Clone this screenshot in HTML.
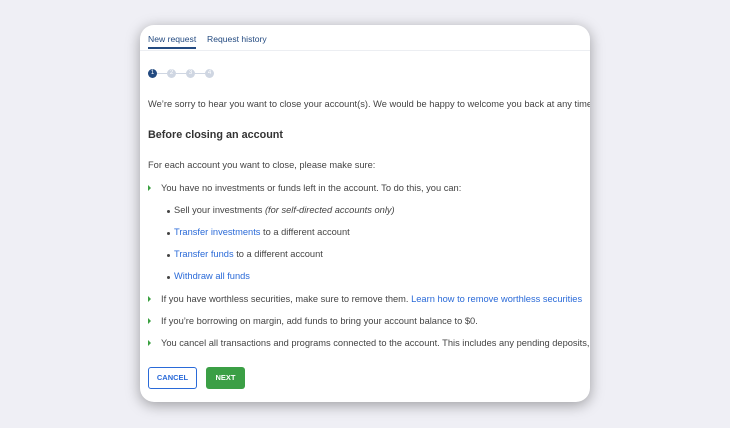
<!DOCTYPE html><html><head><style>
body{margin:0;width:730px;height:428px;background:#efeff5;font-family:"Liberation Sans",sans-serif;position:relative;overflow:hidden}
.card{position:absolute;left:140px;top:25px;width:450px;height:377px;background:#fff;border-radius:14px;box-shadow:0 3px 14px rgba(0,0,0,.35);overflow:hidden}
.t{position:absolute;white-space:nowrap;font-size:9.3px;color:#444}
a{color:#2a6ad8;text-decoration:none}
.tab{position:absolute;top:9px;font-size:8.6px;color:#234a80}
.dot{position:absolute;top:44px;width:9px;height:9px;border-radius:50%;background:#cfd6e2;color:#fff;font-size:6px;text-align:center;line-height:9px}
.ln{position:absolute;top:48px;height:1px;background:#cfd6e2;width:10px}
.arr{position:absolute;width:0;height:0;border-left:3px solid #3aa040;border-top:3px solid transparent;border-bottom:3px solid transparent}
.b{position:absolute;width:3px;height:3px;border-radius:50%;background:#444}
</style></head><body><div class="card">
<div class="tab" style="left:8px">New request</div>
<div style="position:absolute;left:8px;top:22px;width:48px;height:1.5px;background:#234a80"></div>
<div class="tab" style="left:67px">Request history</div>
<div style="position:absolute;left:0;top:25px;width:450px;height:1px;background:#eceef2"></div>
<div class="dot" style="left:8px;background:#234a80">1</div><div class="ln" style="left:17px"></div>
<div class="dot" style="left:27px">2</div><div class="ln" style="left:36px"></div>
<div class="dot" style="left:46px">3</div><div class="ln" style="left:55px"></div>
<div class="dot" style="left:65px">4</div>
<div class="t" style="left:8px;top:74px">We’re sorry to hear you want to close your account(s). We would be happy to welcome you back at any time.</div>
<div class="t" style="left:8px;top:104px;font-weight:bold;font-size:10.8px;color:#333">Before closing an account</div>
<div class="t" style="left:8px;top:135px">For each account you want to close, please make sure:</div>
<div class="arr" style="left:8px;top:160px"></div><div class="t" style="left:21px;top:158px">You have no investments or funds left in the account. To do this, you can:</div>
<div class="b" style="left:27px;top:185px"></div><div class="t" style="left:34px;top:180px">Sell your investments <i>(for self-directed accounts only)</i></div>
<div class="b" style="left:27px;top:207px"></div><div class="t" style="left:34px;top:202px"><a>Transfer investments</a> to a different account</div>
<div class="b" style="left:27px;top:229px"></div><div class="t" style="left:34px;top:224px"><a>Transfer funds</a> to a different account</div>
<div class="b" style="left:27px;top:251px"></div><div class="t" style="left:34px;top:246px"><a>Withdraw all funds</a></div>
<div class="arr" style="left:8px;top:271px"></div><div class="t" style="left:21px;top:269px">If you have worthless securities, make sure to remove them. <a>Learn how to remove worthless securities</a></div>
<div class="arr" style="left:8px;top:293px"></div><div class="t" style="left:21px;top:291px">If you’re borrowing on margin, add funds to bring your account balance to $0.</div>
<div class="arr" style="left:8px;top:315px"></div><div class="t" style="left:21px;top:313px">You cancel all transactions and programs connected to the account. This includes any pending deposits, withdrawals</div>
<div style="position:absolute;left:8px;top:342px;width:47px;height:20px;border:1px solid #2a6ad8;border-radius:3px;color:#2a6ad8;font-size:7.5px;font-weight:bold;text-align:center;line-height:20px">CANCEL</div>
<div style="position:absolute;left:66px;top:342px;width:39px;height:22px;background:#3b9f45;border-radius:3px;color:#fff;font-size:7.5px;font-weight:bold;text-align:center;line-height:22px">NEXT</div>
</div></body></html>
